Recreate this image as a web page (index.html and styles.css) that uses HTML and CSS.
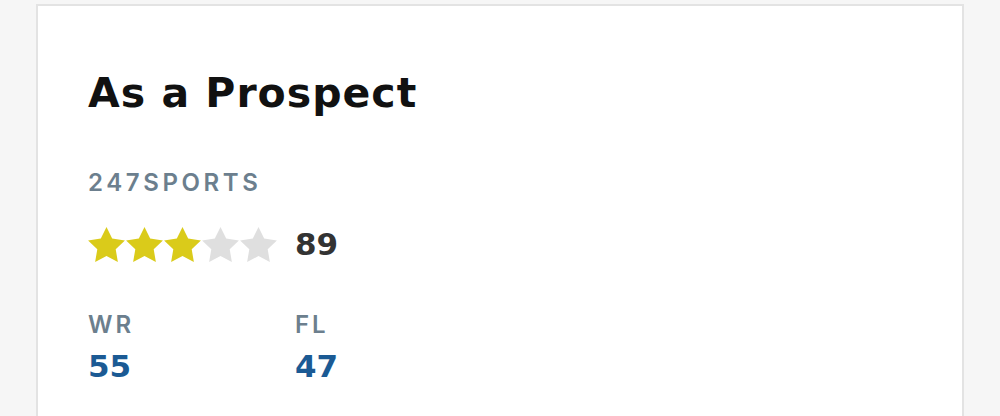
FILE: index.html
```html
<!DOCTYPE html>
<html lang="en">

<head>
  <meta charset="UTF-8" />
  <meta name="viewport" content="width=device-width, initial-scale=1.0" />
  <title>As a Prospect</title>
  <link rel="stylesheet" href="styles.css">
</head>

<body>
  <div class="card">
    <h2 class="card-title">As a Prospect</h2>
    <div class="source">247SPORTS</div>
    <div class="rating">
      <div class="stars">
        <svg class="star on" viewBox="2 2 20 19.02"><polygon points="12,2 15.09,8.26 22,9.27 17,14.14 18.18,21.02 12,17.77 5.82,21.02 7,14.14 2,9.27 8.91,8.26" /></svg>
        <svg class="star on" viewBox="2 2 20 19.02"><polygon points="12,2 15.09,8.26 22,9.27 17,14.14 18.18,21.02 12,17.77 5.82,21.02 7,14.14 2,9.27 8.91,8.26" /></svg>
        <svg class="star on" viewBox="2 2 20 19.02"><polygon points="12,2 15.09,8.26 22,9.27 17,14.14 18.18,21.02 12,17.77 5.82,21.02 7,14.14 2,9.27 8.91,8.26" /></svg>
        <svg class="star" viewBox="2 2 20 19.02"><polygon points="12,2 15.09,8.26 22,9.27 17,14.14 18.18,21.02 12,17.77 5.82,21.02 7,14.14 2,9.27 8.91,8.26" /></svg>
        <svg class="star" viewBox="2 2 20 19.02"><polygon points="12,2 15.09,8.26 22,9.27 17,14.14 18.18,21.02 12,17.77 5.82,21.02 7,14.14 2,9.27 8.91,8.26" /></svg>
      </div>
      <span class="score">89</span>
    </div>
    <ul class="ranks">
      <li>
        <span class="rank-label">WR</span>
        <span class="rank-value">55</span>
      </li>
      <li>
        <span class="rank-label">FL</span>
        <span class="rank-value">47</span>
      </li>
    </ul>
  </div>
</body>

</html>
```

FILE: styles.css
```css
* {
  box-sizing: border-box;
}

body {
  margin: 0;
  padding: 4px 36px 0 36px;
  background: #f6f6f6;
  font-family: Inter, "Noto Sans", sans-serif;
  height: 416px;
  overflow: hidden;
}

.card {
  background: #fff;
  border: 2px solid #e3e3e3;
  border-bottom: none;
  height: 420px;
  padding: 62px 50px 0 50px;
}

.card-title {
  margin: 0;
  font-family: "DejaVu Sans", Inter, sans-serif;
  font-size: 41px;
  line-height: 50px;
  font-weight: 700;
  color: #111;
  letter-spacing: 1px;
}

.source {
  margin-top: 50px;
  font-size: 24px;
  line-height: 30px;
  font-weight: 600;
  color: #6c7f8e;
  letter-spacing: 3.6px;
}

.rating {
  margin-top: 28px;
  display: flex;
  align-items: center;
}

.stars {
  display: flex;
  gap: 1px;
}

.star {
  width: 37px;
  height: 35px;
  display: block;
  fill: #dfdfdf;
}

.star.on {
  fill: #dacb1a;
}

.score {
  margin-left: 18px;
  font-family: "DejaVu Sans", Inter, sans-serif;
  font-size: 31px;
  font-weight: 700;
  color: #333;
}

.ranks {
  margin: 48px 0 0 0;
  padding: 0;
  list-style: none;
  display: flex;
}

.ranks li {
  width: 207px;
  display: flex;
  flex-direction: column;
}

.rank-label {
  font-size: 24px;
  line-height: 30px;
  font-weight: 600;
  color: #6c7f8e;
  letter-spacing: 3px;
}

.rank-value {
  margin-top: 9px;
  font-family: "DejaVu Sans", Inter, sans-serif;
  font-size: 31px;
  line-height: 34px;
  font-weight: 700;
  color: #1b5a94;
}
```
